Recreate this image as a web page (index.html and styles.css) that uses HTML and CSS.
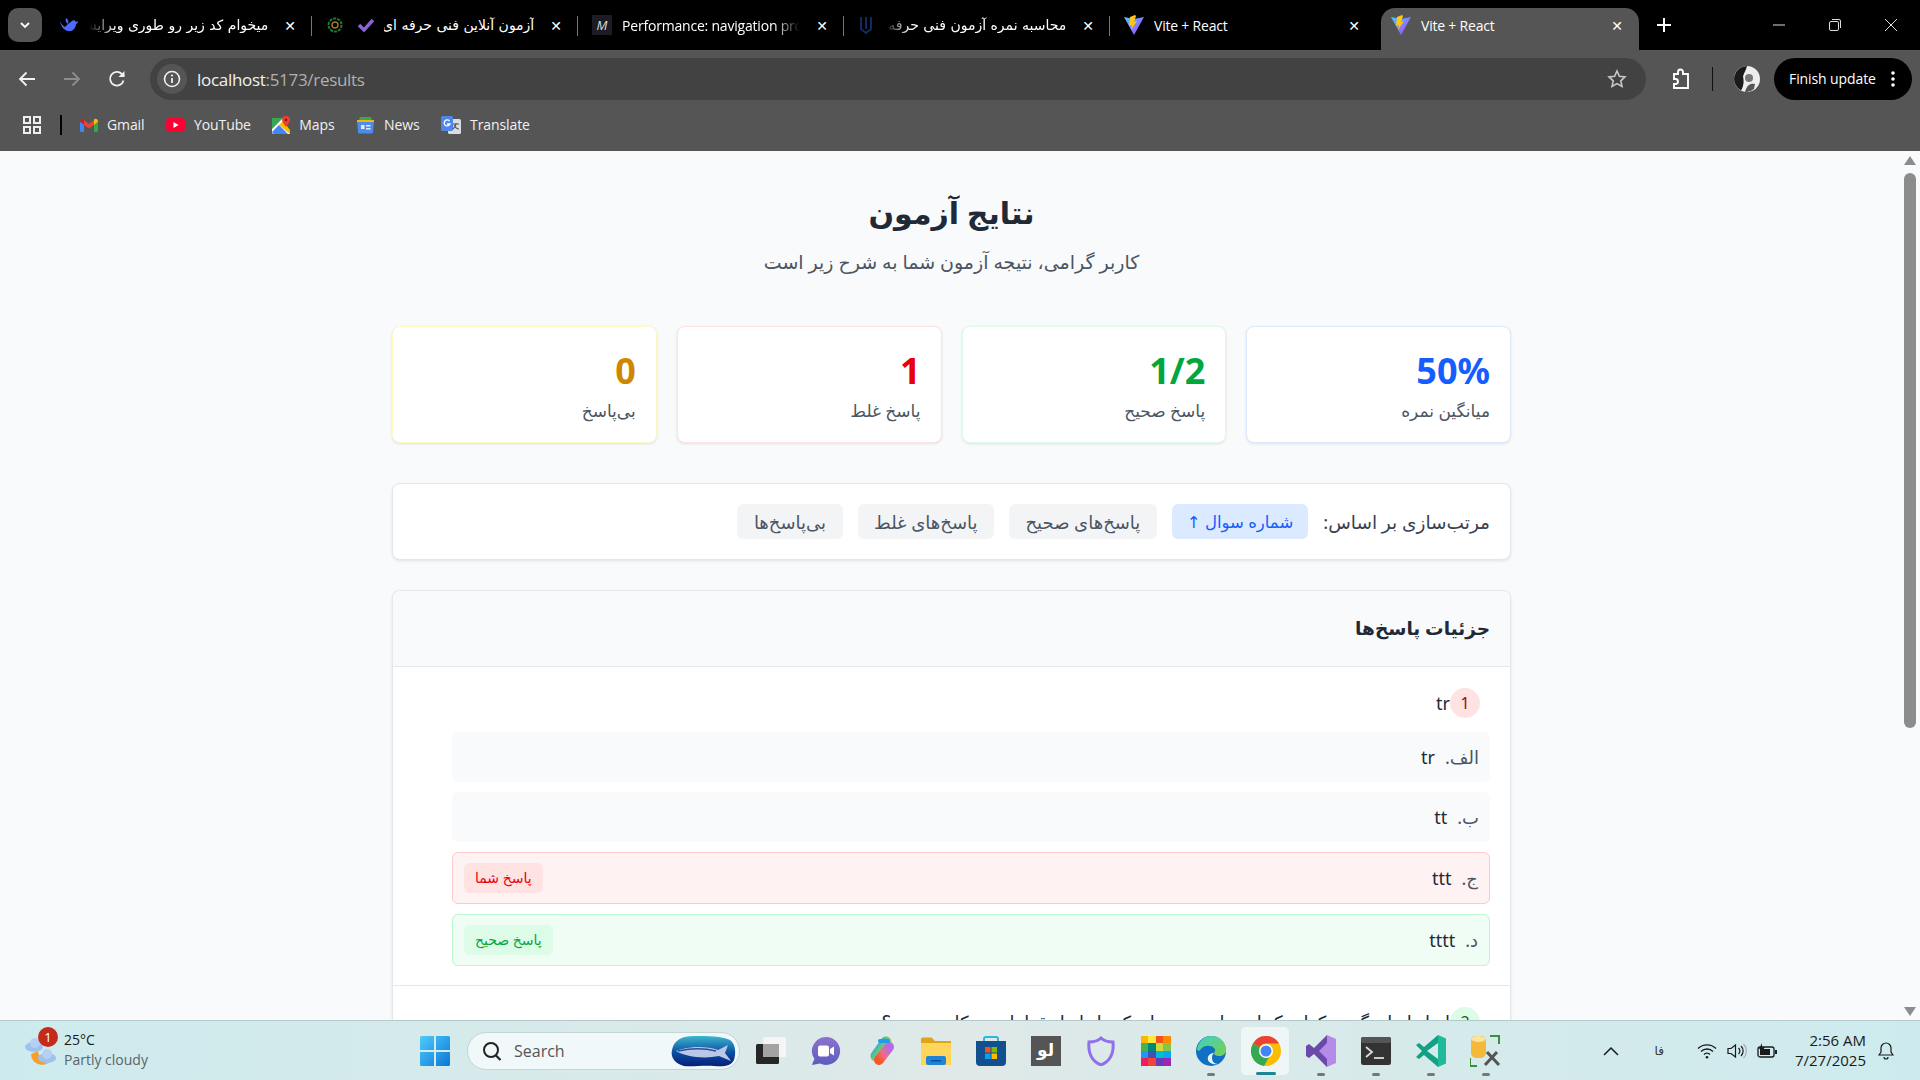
FILE: index.html
```html
<!DOCTYPE html>
<html lang="fa">
<head>
<meta charset="utf-8">
<title>Vite + React</title>
<link rel="stylesheet" href="styles.css">
</head>
<body>

<!-- tab strip -->
<div class="tabstrip">
  <div class="tab-search"><svg width="14" height="14" viewBox="0 0 14 14"><path d="M3 5l4 4 4-4" fill="none" stroke="#fff" stroke-width="1.8"/></svg></div>
  <div class="tab">
    <svg class="fav" width="20" height="20" viewBox="0 0 20 20"><path d="M1 6c1 7 6 11 11 10 3-1 5-4 5-7 1 0 2-1 2-3l-2 1c-1-2-3-2-4-1L9 9c1-3 0-5-2-6-1 3 0 4 2 6l-3 3C4 11 2 9 1 6z" fill="#4d6bfe"/></svg>
    <span class="tab-title fa fade-l">میخوام کد زیر رو طوری ویرایش کنی</span>
    <span class="x">✕</span>
  </div>
  <div class="tab">
    <svg class="fav" width="18" height="18" viewBox="0 0 18 18"><circle cx="9" cy="9" r="6.5" fill="none" stroke="#1d7a35" stroke-width="2" stroke-dasharray="3 1"/><circle cx="9" cy="9" r="3" fill="none" stroke="#a8741a" stroke-width="1.5"/></svg>
    <svg class="fav2" width="16" height="14" viewBox="0 0 16 14"><path d="M1 7l5 5 9-10" fill="none" stroke="#8a63d2" stroke-width="3.4"/></svg>
    <span class="tab-title fa">آزمون آنلاین فنی حرفه ای</span>
    <span class="x">✕</span>
  </div>
  <div class="tab">
    <span class="m-fav">M</span>
    <span class="tab-title ltr fade-r">Performance: navigation profile</span>
    <span class="x">✕</span>
  </div>
  <div class="tab">
    <svg class="fav" width="16" height="20" viewBox="0 0 16 20"><path d="M3 2v12l5 4 5-4V2M8 2v12" fill="none" stroke="#122a63" stroke-width="2"/></svg>
    <span class="tab-title fa fade-l">محاسبه نمره آزمون فنی حرفه ای</span>
    <span class="x">✕</span>
  </div>
  <div class="tab">
    <svg class="fav" width="20" height="20" viewBox="0 0 20 20"><path d="M0 2l10 18L20 2l-10 2z" fill="url(#vg)"/><path d="M11 0L6 2l-1 9 3-1-1 5 6-9-3 1 2-6z" fill="#ffc517"/><defs><linearGradient id="vg" x1="0" y1="0" x2="1" y2="1"><stop offset="0" stop-color="#41d1ff"/><stop offset="1" stop-color="#bd34fe"/></linearGradient></defs></svg>
    <span class="tab-title ltr">Vite + React</span>
    <span class="x">✕</span>
  </div>
  <div class="tab active">
    <svg class="fav" width="20" height="20" viewBox="0 0 20 20"><path d="M0 2l10 18L20 2l-10 2z" fill="url(#vg)"/><path d="M11 0L6 2l-1 9 3-1-1 5 6-9-3 1 2-6z" fill="#ffc517"/></svg>
    <span class="tab-title ltr">Vite + React</span>
    <span class="x">✕</span>
  </div>
  <div class="new-tab"><svg width="14" height="14" viewBox="0 0 14 14"><path d="M7 0v14M0 7h14" stroke="#fff" stroke-width="2"/></svg></div>
  <div class="win-controls">
    <svg width="12" height="12" viewBox="0 0 12 12"><path d="M0 6h12" stroke="#ddd"/></svg>
    <svg width="12" height="12" viewBox="0 0 12 12"><rect x=".5" y="2.5" width="9" height="9" rx="1.5" fill="none" stroke="#ddd"/><path d="M3 .5h7a1.5 1.5 0 0 1 1.5 1.5v7" fill="none" stroke="#ddd"/></svg>
    <svg width="12" height="12" viewBox="0 0 12 12"><path d="M0 0l12 12M12 0L0 12" stroke="#ddd"/></svg>
  </div>
</div>

<!-- address bar -->
<div class="toolbar">
  <svg class="tool" width="18" height="18" viewBox="0 0 18 18"><path d="M17 9H2M8.500 2.500L2 9l6.500 6.500" fill="none" stroke="#f1f1f1" stroke-width="1.8"/></svg>
  <svg class="tool" width="18" height="18" viewBox="0 0 18 18"><path d="M1 9h15M9.500 2.500L16 9l-6.500 6.500" fill="none" stroke="#8d8d8d" stroke-width="1.8"/></svg>
  <svg class="tool" width="18" height="18" viewBox="0 0 18 18"><path d="M15.500 10.500A6.800 6.800 0 1 1 13.800 4L16 6" fill="none" stroke="#f1f1f1" stroke-width="1.8"/><path d="M16.500 1v6h-6z" fill="#f1f1f1"/></svg>
  <div class="omnibox">
    <span class="info"><svg width="18" height="18" viewBox="0 0 18 18"><circle cx="9" cy="9" r="7.500" fill="none" stroke="#eee" stroke-width="1.600"/><path d="M9 8v5" stroke="#eee" stroke-width="1.800"/><circle cx="9" cy="5.500" r="1.100" fill="#eee"/></svg></span>
    <span class="url">localhost<span class="url-dim">:5173/results</span></span>
    <svg class="star" width="20" height="20" viewBox="0 0 20 20"><path d="M10 2l2.400 5.300 5.600.6-4.200 3.900 1.200 5.700L10 14.600l-5 2.900 1.200-5.700L2 7.900l5.600-.6z" fill="none" stroke="#c7c7c7" stroke-width="1.600"/></svg>
  </div>
  <svg class="ext" width="22" height="22" viewBox="0 0 22 22"><path d="M4 6h4V4a2.500 2.500 0 0 1 5 0v2h5v14H4v-4h1.500a2.500 2.500 0 0 0 0-5H4z" fill="none" stroke="#fff" stroke-width="1.900"/></svg>
  <span class="tool-sep"></span>
  <svg class="avatar" width="26" height="26" viewBox="0 0 26 26"><circle cx="13" cy="13" r="13" fill="#eee"/><path d="M13 0a13 13 0 0 0-6 24.500c3-5 3-10 2-14 1-4 3-6 4-10.500z" fill="#1a1a1a"/><circle cx="15" cy="12" r="4" fill="#777"/><path d="M11 26c2-7 5-9 10-8l-1 5a13 13 0 0 1-9 3z" fill="#555"/></svg>
  <div class="update">Finish update<svg width="4" height="16" viewBox="0 0 4 16"><circle cx="2" cy="2" r="1.800" fill="#fff"/><circle cx="2" cy="8" r="1.800" fill="#fff"/><circle cx="2" cy="14" r="1.800" fill="#fff"/></svg></div>
</div>

<!-- bookmarks -->
<div class="bookmarks">
  <svg class="apps" width="20" height="18" viewBox="0 0 20 18"><g fill="none" stroke="#eee" stroke-width="2"><rect x="2" y="1" width="6" height="6"/><rect x="12" y="1" width="6" height="6"/><rect x="2" y="11" width="6" height="6"/><rect x="12" y="11" width="6" height="6"/></g></svg>
  <span class="bm-sep"></span>
  <div class="bm">
    <svg width="18" height="14" viewBox="0 0 18 14"><path d="M0 3v9.500A1.500 1.500 0 0 0 1.500 14H4V6z" fill="#4285f4"/><path d="M14 14h2.500a1.500 1.500 0 0 0 1.500-1.500V3l-4 3z" fill="#34a853"/><path d="M4 7V2L9 6l5-4v5L9 10.500z" fill="#ea4335"/><path d="M0 3.500C0 1 2.500 0 4 1.500V7z" fill="#c5221f"/><path d="M14 1.500C15.500 0 18 1 18 3.500L14 7z" fill="#fbbc04"/></svg>
    Gmail
  </div>
  <div class="bm">
    <svg width="19" height="14" viewBox="0 0 19 14"><rect width="19" height="14" rx="4" fill="#ff0033"/><path d="M7.500 4l5 3-5 3z" fill="#fff"/></svg>
    YouTube
  </div>
  <div class="bm">
    <svg width="18" height="18" viewBox="0 0 18 18"><path d="M0 2h11L0 13z" fill="#34a853"/><path d="M0 13L11 2l7 16H2a2 2 0 0 1-2-2z" fill="#fff"/><path d="M0 16l7-7 9 9H2z" fill="#4285f4"/><path d="M7 9l4-4 7 9v4z" fill="#fbbc04"/><path d="M14 0a4 4 0 0 1 4 4c0 2-2 4-4 7-2-3-4-5-4-7a4 4 0 0 1 4-4z" fill="#ea4335"/><circle cx="14" cy="4" r="1.400" fill="#a50e0e"/></svg>
    Maps
  </div>
  <div class="bm">
    <svg width="19" height="18" viewBox="0 0 19 18"><path d="M3 4l1-3h11l1 3z" fill="#34a853"/><path d="M1 4h17l-1 12a1.500 1.500 0 0 1-1.500 1.500h-12A1.500 1.500 0 0 1 2 16z" fill="#4f8be8"/><path d="M1 4h17v2H1z" fill="#f2b705"/><rect x="5" y="9" width="3.500" height="4" fill="#dfe9fb"/><rect x="10" y="9" width="4.500" height="1.500" fill="#dfe9fb"/><rect x="10" y="12" width="4.500" height="1.500" fill="#dfe9fb"/></svg>
    News
  </div>
  <div class="bm">
    <svg width="20" height="18" viewBox="0 0 20 18"><rect x="7" y="3" width="13" height="15" rx="1.500" fill="#d9dce1"/><rect width="12" height="15" rx="1.500" fill="#4f86e8"/><path d="M8.500 5a3 3 0 1 0 .5 3H6" fill="none" stroke="#fff" stroke-width="1.300"/><path d="M12 8h6M15 7v1c0 2-2 4-3 5M13 9c1 2 3 4 5 4" fill="none" stroke="#555" stroke-width="1.100"/></svg>
    Translate
  </div>
</div>

<!-- page -->
<div class="viewport">
  <main class="page" dir="rtl">
    <header class="head">
      <h1>نتایج آزمون</h1>
      <p>کاربر گرامی، نتیجه آزمون شما به شرح زیر است</p>
    </header>

    <section class="stats">
      <div class="stat stat-blue"><div class="stat-num">50%</div><div class="stat-label">میانگین نمره</div></div>
      <div class="stat stat-green"><div class="stat-num">1/2</div><div class="stat-label">پاسخ صحیح</div></div>
      <div class="stat stat-red"><div class="stat-num">1</div><div class="stat-label">پاسخ غلط</div></div>
      <div class="stat stat-yellow"><div class="stat-num">0</div><div class="stat-label">بی‌پاسخ</div></div>
    </section>

    <section class="sort">
      <span class="sort-label">مرتب‌سازی بر اساس:</span>
      <button class="sort-btn on">شماره سوال ↑</button>
      <button class="sort-btn">پاسخ‌های صحیح</button>
      <button class="sort-btn">پاسخ‌های غلط</button>
      <button class="sort-btn">بی‌پاسخ‌ها</button>
    </section>

    <section class="details">
      <h2 class="details-head">جزئیات پاسخ‌ها</h2>

      <article class="question">
        <div class="q-title"><span class="q-num wrong">1</span><span>tr</span></div>
        <ul class="options">
          <li class="opt"><span class="opt-text"><span class="opt-key">الف.</span><span class="opt-val">tr</span></span></li>
          <li class="opt"><span class="opt-text"><span class="opt-key">ب.</span><span class="opt-val">tt</span></span></li>
          <li class="opt opt-wrong"><span class="opt-text"><span class="opt-key">ج.</span><span class="opt-val">ttt</span></span><span class="pill pill-red">پاسخ شما</span></li>
          <li class="opt opt-right"><span class="opt-text"><span class="opt-key">د.</span><span class="opt-val">tttt</span></span><span class="pill pill-green">پاسخ صحیح</span></li>
        </ul>
      </article>

      <article class="question">
        <div class="q-title"><span class="q-num right">2</span><span>ابزار اندازه‌گیری کدام یک از موارد زیر برای کنترل ابعاد قطعات به کار می‌رود؟</span></div>
      </article>
    </section>
  </main>
  <div class="scrollbar">
    <svg width="12" height="9" viewBox="0 0 12 9"><path d="M6 0l6 9H0z" fill="#8c8c8c"/></svg>
    <div class="thumb"></div>
    <svg class="arrow-down" width="12" height="9" viewBox="0 0 12 9"><path d="M6 9L0 0h12z" fill="#8c8c8c"/></svg>
  </div>
</div>

<!-- windows taskbar -->
<footer class="taskbar">
  <div class="weather">
    <div class="weather-icon">
      <svg width="34" height="38" viewBox="0 0 34 38"><path d="M7 22a11 11 0 0 0 20 6 10 10 0 0 1-13-9z" fill="#f5a02c"/><ellipse cx="10" cy="15" rx="9" ry="5" fill="#9fc1ee"/><circle cx="11" cy="11" r="5" fill="#b5d0f3"/><ellipse cx="23" cy="26" rx="9" ry="5" fill="#9fc1ee"/><circle cx="23" cy="22" r="5" fill="#b5d0f3"/></svg>
      <span class="weather-badge">1</span>
    </div>
    <div class="weather-text"><div class="temp">25°C</div><div class="cond">Partly cloudy</div></div>
  </div>

  <div class="task-center">
    <svg class="start" width="30" height="30" viewBox="0 0 30 30"><defs><linearGradient id="wg" x1="0" y1="0" x2="1" y2="1"><stop offset="0" stop-color="#4fcbfa"/><stop offset="1" stop-color="#0a78d8"/></linearGradient></defs><path d="M0 1.500A1.500 1.500 0 0 1 1.500 0H14v14H0zM16 0h12.500A1.500 1.500 0 0 1 30 1.500V14H16zM0 16h14v14H1.500A1.500 1.500 0 0 1 0 28.500zM16 16h14v12.500a1.500 1.500 0 0 1-1.500 1.500H16z" fill="url(#wg)"/></svg>
    <div class="search">
      <svg width="20" height="20" viewBox="0 0 20 20"><circle cx="9" cy="9" r="7" fill="none" stroke="#222" stroke-width="2"/><path d="M13.500 14l5 5" stroke="#222" stroke-width="2.200"/></svg>
      <span class="search-text">Search</span>
      <svg class="fish" width="66" height="34" viewBox="0 0 66 34"><defs><linearGradient id="fg" x1="0" y1="0" x2="0" y2="1"><stop offset="0" stop-color="#3cb7cf"/><stop offset=".55" stop-color="#0a4da0"/><stop offset="1" stop-color="#071f78"/></linearGradient></defs><path d="M2 16C4 6 12 2 24 2c14 0 28 0 36 4 6 4 6 14 4 20-3 6-10 7-20 6-10-1-22 1-30 0C6 30 0 24 2 16z" fill="url(#fg)"/><path d="M6 17c10-4 28-6 42-1l10-5-3 8 6 8-12-5C34 25 16 23 6 17z" fill="#b9c7e8"/><path d="M8 17c14-3 26-3 38 0" stroke="#2b4c9c" stroke-width="1.500" fill="none"/></svg>
    </div>
    <svg class="app" width="30" height="27" viewBox="0 0 30 27"><rect x="7" y="0" width="23" height="20" rx="1.500" fill="#f5f5f5"/><rect x="0" y="7" width="23" height="20" rx="1.500" fill="#262626"/><rect x="7" y="7" width="16" height="13" fill="#a3a3a3"/></svg>
    <span class="app-slot"><svg width="30" height="30" viewBox="0 0 30 30"><defs><linearGradient id="mg" x1="0" y1="0" x2="0" y2="1"><stop offset="0" stop-color="#8f72cc"/><stop offset="1" stop-color="#5a5cc0"/></linearGradient></defs><path d="M15 1a14 14 0 1 1-6 26.600L1 29l1-3 1.500-3A14 14 0 0 1 15 1z" fill="url(#mg)"/><rect x="7" y="9.500" width="11" height="11" rx="2" fill="#fff"/><path d="M19 13l4-2.500v9L19 17z" fill="#fff"/></svg></span>
    <span class="app-slot"><svg width="30" height="30" viewBox="0 0 30 30"><defs><linearGradient id="cg1" x1="0" y1="0" x2="1" y2="1"><stop offset="0" stop-color="#1fa8ee"/><stop offset=".55" stop-color="#7bd05a"/><stop offset="1" stop-color="#f2c23c"/></linearGradient><linearGradient id="cg2" x1="1" y1="0" x2="0" y2="1"><stop offset="0" stop-color="#b36be8"/><stop offset=".55" stop-color="#ef6d8a"/><stop offset="1" stop-color="#f5572e"/></linearGradient></defs><path d="M20 6L10 20" stroke="url(#cg1)" stroke-width="11" stroke-linecap="round"/><path d="M23 11L13 24" stroke="url(#cg2)" stroke-width="10" stroke-linecap="round"/><path d="M14 5h8" stroke="#1f9bf0" stroke-width="4" stroke-linecap="round"/></svg></span>
    <span class="app-slot"><svg width="30" height="28" viewBox="0 0 30 28"><path d="M0 2a1.500 1.500 0 0 1 1.500-1.500h9L14 4h16v24H0z" fill="#e0a418"/><path d="M0 6h30v22H0z" fill="#ffd65c"/><rect x="5" y="19" width="20" height="9" rx="2" fill="#1f83d8"/><rect x="10" y="23" width="10" height="1.500" fill="#0d4f95"/></svg></span>
    <span class="app-slot"><svg width="30" height="30" viewBox="0 0 30 30"><path d="M8 6V3a2 2 0 0 1 2-2h10a2 2 0 0 1 2 2v3" fill="none" stroke="#29b6e8" stroke-width="2"/><path d="M0 5h30v21a4 4 0 0 1-4 4H4a4 4 0 0 1-4-4z" fill="#124f8e"/><rect x="9" y="11" width="5.500" height="5.500" fill="#f25022"/><rect x="15.500" y="11" width="5.500" height="5.500" fill="#7fba00"/><rect x="9" y="17.500" width="5.500" height="5.500" fill="#00a4ef"/><rect x="15.500" y="17.500" width="5.500" height="5.500" fill="#ffb900"/></svg></span>
    <span class="app-slot"><span class="lo">لو</span></span>
    <span class="app-slot"><svg width="30" height="30" viewBox="0 0 30 30"><path d="M15 2c3 3 7 4 12 4 1 11-2 19-12 23C5 25 2 17 3 6c5 0 9-1 12-4z" fill="none" stroke="#9070ee" stroke-width="3"/></svg></span>
    <span class="app-slot"><span class="mosaic">
      <i style="background:#fbb800"></i><i style="background:#fde93a"></i><i style="background:#f4511e"></i><i style="background:#fb8c00"></i>
      <i style="background:#4caf50"></i><i style="background:#00897b"></i><i style="background:#cddc39"></i><i style="background:#8bc34a"></i>
      <i style="background:#2196f3"></i><i style="background:#3f51b5"></i><i style="background:#00bcd4"></i><i style="background:#03a9f4"></i>
      <i style="background:#e91e63"></i><i style="background:#f44336"></i><i style="background:#673ab7"></i><i style="background:#9c27b0"></i>
    </span></span>
    <span class="app-slot dot"><svg width="30" height="30" viewBox="0 0 30 30"><defs><linearGradient id="eg" x1="0" y1="0" x2="1" y2="1"><stop offset="0" stop-color="#3ed0c8"/><stop offset="1" stop-color="#7ad04b"/></linearGradient></defs><circle cx="15" cy="15" r="15" fill="#0f70c4"/><path d="M1 13C3 4 9 0 15 0c9 0 15 6 15 14 0 4-3 6-7 6-3 0-5-1-5-3 1-2 2-3 0-5-3-3-10-3-13 1-2 2-3 3-4 0z" fill="url(#eg)"/><path d="M18 17c-4 0-7 3-6 7 1 3 5 5 10 4-4 0-6-3-6-6s1-4 2-5z" fill="#e8f4fa"/></svg></span>
    <span class="app-slot chrome-slot"><svg width="30" height="30" viewBox="0 0 30 30"><circle cx="15" cy="15" r="15" fill="#fbbc04"/><path d="M2 7.500A15 15 0 0 1 28 7.500H15A7.500 7.500 0 0 0 8.500 11.200z" fill="#ea4335"/><path d="M2 7.500A15 15 0 0 0 13 29.900l6.500-11.400a7.500 7.500 0 0 1-11-7.300z" fill="#34a853"/><circle cx="15" cy="15" r="7" fill="#fff"/><circle cx="15" cy="15" r="5.500" fill="#4285f4"/></svg></span>
    <span class="app-slot dot"><svg width="30" height="32" viewBox="0 0 30 32"><path d="M21 0l9 4v24l-9 4L8 18 21 8z" fill="#b58ae8"/><path d="M21 0L8 13 3 9 0 11v10l3 2 5-4 13 13V24l-8-8 8-8z" fill="#6a4aa8"/></svg></span>
    <span class="app-slot dot"><svg width="30" height="28" viewBox="0 0 30 28"><rect width="30" height="28" rx="2.500" fill="#333"/><rect width="30" height="6" rx="2" fill="#555"/><path d="M5 10l6 5-6 5" fill="none" stroke="#ddd" stroke-width="1.800"/><path d="M13 21h10" stroke="#ddd" stroke-width="1.800"/></svg></span>
    <span class="app-slot dot"><svg width="30" height="32" viewBox="0 0 30 32"><path d="M22 0l8 3.500v25L22 32z" fill="#1fb99b"/><path d="M22 0v8L11 16l11 8v8L8 20l-5 4-3-2 6-6-6-6 3-2 5 4z" fill="#14a085"/></svg></span>
    <span class="app-slot dot"><svg width="32" height="32" viewBox="0 0 32 32"><rect x="1" y="1" width="15" height="22" rx="5" fill="#f5b93a"/><ellipse cx="8.500" cy="4" rx="7" ry="3" fill="#fbe3a0"/><path d="M20 1h9v8M0 23v8h7" fill="none" stroke="#3d8f3f" stroke-width="2"/><path d="M15 30l12-13M17 17l12 13" stroke="#555" stroke-width="3"/></svg></span>
  </div>

  <div class="tray">
    <svg width="16" height="10" viewBox="0 0 16 10"><path d="M1 9l7-7 7 7" fill="none" stroke="#1a1a1a" stroke-width="1.500"/></svg>
    <span class="lang">فا</span>
    <svg class="wifi" width="20" height="16" viewBox="0 0 20 16"><g fill="none" stroke="#1a1a1a" stroke-width="1.300"><path d="M1 5.500a13 13 0 0 1 18 0"/><path d="M4 8.500a8.500 8.500 0 0 1 12 0"/><path d="M7 11.500a4 4 0 0 1 6 0"/></g><circle cx="10" cy="14.200" r="1.300" fill="#1a1a1a"/></svg>
    <svg class="vol" width="20" height="16" viewBox="0 0 20 16"><path d="M1 5.500h3L8.500 2v12L4 10.500H1z" fill="none" stroke="#1a1a1a" stroke-width="1.200"/><path d="M11.500 5a4 4 0 0 1 0 6" fill="none" stroke="#1a1a1a" stroke-width="1.200"/><path d="M14 3a7 7 0 0 1 0 10" fill="none" stroke="#1a1a1a" stroke-width="1.200"/><path d="M16.500 1a10 10 0 0 1 0 14" fill="none" stroke="#aaa" stroke-width="1.200"/></svg>
    <svg class="bat" width="21" height="16" viewBox="0 0 21 16"><rect x="1" y="4" width="16" height="10" rx="2" fill="none" stroke="#1a1a1a" stroke-width="1.300"/><rect x="3" y="6" width="10" height="6" fill="#1a1a1a"/><rect x="18" y="7" width="2" height="4" fill="#1a1a1a"/><path d="M5 0L2 6h3l-1 4 4-6H5z" fill="#1a1a1a"/></svg>
    <div class="clock"><div>2:56 AM</div><div>7/27/2025</div></div>
    <svg class="bell" width="16" height="18" viewBox="0 0 16 18"><path d="M8 1a5 5 0 0 0-5 5v4l-2 3h14l-2-3V6a5 5 0 0 0-5-5zM6 15a2 2 0 0 0 4 0" fill="none" stroke="#1a1a1a" stroke-width="1.200"/></svg>
  </div>
</footer>

</body>
</html>
```
FILE: styles.css
```css
/* reset */
html, body {
	margin: 0;
	height: 100%;
	overflow: hidden;
}

body {
	display: flex;
	flex-direction: column;
	font-family: "Open Sans", "Noto Sans", "DejaVu Sans", sans-serif;
	background: #f9fafb;
}

/* ---- browser chrome ---- */
.tabstrip {
	height: 50px;
	background: #000;
	display: flex;
	align-items: flex-end;
	padding-left: 8px;
	flex-shrink: 0;
}

.tab-search {
	width: 34px;
	height: 34px;
	margin-bottom: 8px;
	margin-right: 11px;
	border-radius: 10px;
	background: #555;
	display: flex;
	align-items: center;
	justify-content: center;
}

.tab {
	width: 266px;
	height: 42px;
	box-sizing: border-box;
	display: flex;
	align-items: center;
	padding: 0 16px 8px 14px;
	color: #fff;
	position: relative;
}

.tab::after {
	content: "";
	position: absolute;
	right: 0;
	top: 8px;
	height: 20px;
	width: 1px;
	background: #777;
}

.tab-search + .tab {
	width: 259px;
	padding-left: 6px;
}

.tab.active {
	background: #555;
	width: 258px;
	border-radius: 14px 14px 0 0;
	padding-left: 10px;
	margin-left: 5px;
}

.tab.active::after {
	display: none;
}

.tab:nth-child(6)::after {
	display: none;
}

.tab .fav {
	flex-shrink: 0;
}

.fav2 {
	flex-shrink: 0;
	margin-left: 14px;
}

.m-fav {
	width: 20px;
	height: 20px;
	background: #1c1c24;
	color: #ddd;
	font-style: italic;
	font-size: 13px;
	text-align: center;
	line-height: 20px;
	flex-shrink: 0;
}

.tab-title {
	flex: 1;
	font-size: 14px;
	white-space: nowrap;
	overflow: hidden;
	margin: 0 16px 0 10px;
}

.tab-title.fa {
	direction: rtl;
	font-family: "DejaVu Sans", sans-serif;
	font-size: 14px;
	text-align: right;
}

.tab-title.ltr {
	letter-spacing: -0.2px;
}

.fade-l {
	-webkit-mask-image: linear-gradient(to right, transparent, #000 26px);
	mask-image: linear-gradient(to right, transparent, #000 26px);
}

.fade-r {
	-webkit-mask-image: linear-gradient(to left, transparent, #000 26px);
	mask-image: linear-gradient(to left, transparent, #000 26px);
}

.x {
	font-size: 14px;
	font-weight: 700;
	flex-shrink: 0;
}

.new-tab {
	margin: 0 0 5px 18px;
	height: 40px;
	display: flex;
	align-items: center;
}

.win-controls {
	margin-left: auto;
	margin-bottom: 5px;
	height: 40px;
	display: flex;
	align-items: center;
	gap: 44px;
	padding-right: 23px;
}

.toolbar {
	height: 58px;
	background: #555;
	display: flex;
	align-items: center;
	padding-left: 18px;
	flex-shrink: 0;
}

.tool {
	margin-right: 27px;
	flex-shrink: 0;
}

.omnibox {
	width: 1496px;
	height: 42px;
	margin-left: -3px;
	border-radius: 21px;
	background: #424242;
	display: flex;
	align-items: center;
	padding: 0 19px 0 7px;
	box-sizing: border-box;
}

.info {
	width: 30px;
	height: 30px;
	border-radius: 50%;
	background: #555;
	display: flex;
	align-items: center;
	justify-content: center;
}

.url {
	margin-left: 10px;
	font-size: 17px;
	letter-spacing: -0.3px;
	color: #f1f1f1;
	flex: 1;
}

.url-dim {
	color: #b0b0b0;
}

.ext {
	margin-left: 24px;
}

.tool-sep {
	width: 1px;
	height: 24px;
	background: #111;
	margin: 0 21px 0 20px;
}

.avatar {
	flex-shrink: 0;
}

.update {
	margin-left: 14px;
	width: 138px;
	height: 42px;
	box-sizing: border-box;
	border-radius: 21px;
	background: #000;
	color: #fff;
	font-size: 14px;
	letter-spacing: -0.1px;
	display: flex;
	align-items: center;
	justify-content: space-between;
	padding: 0 17px 1px 15px;
}

.bookmarks {
	height: 43px;
	box-sizing: border-box;
	background: #555;
	display: flex;
	align-items: center;
	padding: 0 0 10px 22px;
	flex-shrink: 0;
}

.bm-sep {
	width: 2px;
	height: 20px;
	background: #000;
	margin: 0 18px 0 18px;
}

.bm {
	display: flex;
	align-items: center;
	gap: 9px;
	color: #f1f1f1;
	font-size: 14px;
	letter-spacing: -0.1px;
	margin-right: 21.5px;
}

/* ---- page ---- */
.viewport {
	flex: 1;
	min-height: 0;
	display: flex;
	overflow: hidden;
}

.page {
	flex: 1;
	min-width: 0;
	padding: 38px 389px 0 392px;
	box-sizing: border-box;
	font-family: "Noto Sans", "DejaVu Sans", sans-serif;
	color: #1f2937;
}

.scrollbar {
	width: 20px;
	flex-shrink: 0;
	display: flex;
	flex-direction: column;
	align-items: center;
	padding: 5px 0 4px;
	box-sizing: border-box;
}

.thumb {
	width: 12px;
	height: 555px;
	margin-top: 8px;
	border-radius: 6px;
	background: #8c8c8c;
}

.arrow-down {
	margin-top: auto;
}

.head {
	text-align: center;
	margin-bottom: 50px;
}

.head h1 {
	margin: 0;
	font-size: 30px;
	line-height: 48px;
	font-weight: 700;
}

.head p {
	margin: 11px 0 0;
	font-size: 19px;
	line-height: 28px;
	color: #4b5563;
}

.stats {
	display: grid;
	grid-template-columns: repeat(4, 1fr);
	gap: 20px;
	margin-bottom: 40px;
}

.stat {
	height: 117px;
	box-sizing: border-box;
	background: #fff;
	border: 1px solid;
	border-radius: 8px;
	box-shadow: 0 1px 3px rgba(0, 0, 0, 0.1);
	padding: 24px 20px 0;
}

.stat-blue { border-color: #dbeafe; }
.stat-green { border-color: #dcfce7; }
.stat-red { border-color: #fee2e2; }
.stat-yellow { border-color: #fef9c3; }

.stat-num {
	font-size: 36px;
	line-height: 40px;
	font-weight: 700;
}

.stat-blue .stat-num { color: #155dfc; }
.stat-green .stat-num { color: #00a63e; }
.stat-red .stat-num { color: #e7000b; }
.stat-yellow .stat-num { color: #d08700; }

.stat-label {
	margin-top: 8px;
	font-size: 17px;
	line-height: 24px;
	color: #4b5563;
}

.sort {
	height: 77px;
	box-sizing: border-box;
	background: #fff;
	border: 1px solid #e5e7eb;
	border-radius: 8px;
	box-shadow: 0 1px 3px rgba(0, 0, 0, 0.1);
	padding: 0 20px;
	display: flex;
	align-items: center;
	gap: 15px;
	margin-bottom: 30px;
}

.sort-label {
	font-size: 18.5px;
	color: #374151;
}

.sort-btn {
	height: 35px;
	padding: 0 16.5px;
	border: 0;
	border-radius: 6px;
	background: #f3f4f6;
	color: #4b5563;
	font: inherit;
	font-size: 18px;
}

.sort-btn.on {
	background: #dbeafe;
	color: #155dfc;
	font-size: 16.5px;
	padding: 0 15px;
}

.details {
	background: #fff;
	border: 1px solid #e5e7eb;
	border-radius: 8px 8px 0 0;
	box-shadow: 0 1px 3px rgba(0, 0, 0, 0.1);
}

.details-head {
	margin: 0;
	height: 76px;
	box-sizing: border-box;
	padding: 0 20px 2px;
	display: flex;
	align-items: center;
	background: #f9fafb;
	border-bottom: 1px solid #e5e7eb;
	border-radius: 8px 8px 0 0;
	font-size: 18.5px;
	font-weight: 600;
}

.question {
	padding: 21px 20px 19px;
	border-bottom: 1px solid #e5e7eb;
}

.q-title {
	display: flex;
	align-items: center;
	font-size: 18px;
	line-height: 30px;
	margin: 0 10px 14px 0;
	color: #1f2937;
}

.q-num {
	width: 30px;
	height: 30px;
	border-radius: 50%;
	text-align: center;
	font-size: 16px;
	flex-shrink: 0;
}

.q-num.wrong {
	background: #ffe2e2;
	color: #9f0712;
}

.q-num.right {
	background: #dcfce7;
	color: #016630;
}

.options {
	list-style: none;
	margin: 0;
	padding: 0 0 0 39px;
	display: flex;
	flex-direction: column;
	gap: 10px;
}

.opt {
	min-height: 50px;
	box-sizing: border-box;
	padding: 0 11px;
	border-radius: 6px;
	background: #f9fafb;
	display: flex;
	align-items: center;
	justify-content: space-between;
	font-size: 18px;
	color: #4b5563;
}

.opt-wrong {
	min-height: 52px;
	background: #fef2f2;
	border: 1px solid #ffc9c9;
}

.opt-right {
	min-height: 52px;
	background: #f0fdf4;
	border: 1px solid #b9f8cf;
}

.opt-val {
	margin-right: 10px;
	color: #1f2937;
}

.pill {
	height: 30px;
	padding: 0 11px;
	border-radius: 6px;
	font-size: 14px;
	line-height: 30px;
	font-weight: 500;
}

.pill-red {
	background: #ffe2e2;
	color: #e7000b;
}

.pill-green {
	background: #dcfce7;
	color: #00a63e;
}

/* ---- taskbar ---- */
.taskbar {
	height: 60px;
	flex-shrink: 0;
	box-sizing: border-box;
	border-top: 1px solid #b5c9cb;
	background: linear-gradient(90deg, #cdebee, #dfe9e8 50%, #cdebee);
	display: flex;
	align-items: center;
	position: relative;
}

.weather {
	width: 420px;
	flex-shrink: 0;
	display: flex;
	align-items: center;
	padding-left: 24px;
	box-sizing: border-box;
}

.weather-icon {
	position: relative;
	width: 36px;
	height: 38px;
}

.weather-badge {
	position: absolute;
	left: 14px;
	top: -5px;
	width: 20px;
	height: 20px;
	border-radius: 50%;
	background: #c42b1c;
	color: #fff;
	font-size: 13px;
	text-align: center;
	line-height: 20px;
}

.weather-text {
	margin-left: 4px;
	padding-bottom: 2px;
	font-size: 14px;
	line-height: 20px;
}

.temp {
	color: #1a1a1a;
}

.cond {
	color: #5a6468;
}

.task-center {
	display: flex;
	align-items: center;
}

.start {
	margin-right: 17px;
}

.search {
	width: 273px;
	height: 38px;
	box-sizing: border-box;
	border: 1px solid #c4d5d6;
	border-radius: 19px;
	background: #f0f8f9;
	display: flex;
	align-items: center;
	padding-left: 14px;
	margin-right: 16px;
}

.search-text {
	margin-left: 12px;
	font-size: 16px;
	color: #555;
	flex: 1;
}

.fish {
	margin-right: 3px;
}

.app {
	margin-right: 12px;
}

.app-slot {
	width: 55px;
	height: 48px;
	margin-left: 0;
	display: flex;
	align-items: center;
	justify-content: center;
	position: relative;
	flex-shrink: 0;
}

.app-slot.dot::after {
	content: "";
	position: absolute;
	bottom: -1px;
	left: 50%;
	width: 8px;
	height: 3px;
	margin-left: -4px;
	border-radius: 2px;
	background: #777;
}

.chrome-slot::before {
	content: "";
	position: absolute;
	left: 3px;
	top: 0;
	width: 48px;
	height: 48px;
	border-radius: 5px;
	background: rgba(255, 255, 255, 0.55);
}

.chrome-slot svg {
	position: relative;
}

.chrome-slot::after {
	content: "";
	position: absolute;
	bottom: 0;
	left: 50%;
	width: 20px;
	height: 3px;
	margin-left: -10px;
	border-radius: 2px;
	background: #1f8496;
}

.lo {
	width: 30px;
	height: 30px;
	background: #555;
	color: #fff;
	font-family: "DejaVu Sans", sans-serif;
	font-weight: 700;
	font-size: 17px;
	line-height: 28px;
	text-align: center;
	overflow: hidden;
}

.mosaic {
	width: 30px;
	height: 30px;
	display: grid;
	grid-template-columns: repeat(4, 1fr);
	grid-auto-rows: 1fr;
}

.tray {
	margin-left: auto;
	display: flex;
	align-items: center;
	padding-right: 26px;
}

.lang {
	margin-left: 36px;
	margin-right: 33px;
	font-family: "DejaVu Sans", sans-serif;
	font-size: 12px;
	color: #333;
}

.vol {
	margin-left: 10px;
}

.bat {
	margin-left: 10px;
}

.clock {
	margin-left: 17px;
	padding-bottom: 2px;
	text-align: right;
	font-size: 15px;
	line-height: 20px;
	color: #1a1a1a;
}

.bell {
	margin-left: 12px;
}
```
